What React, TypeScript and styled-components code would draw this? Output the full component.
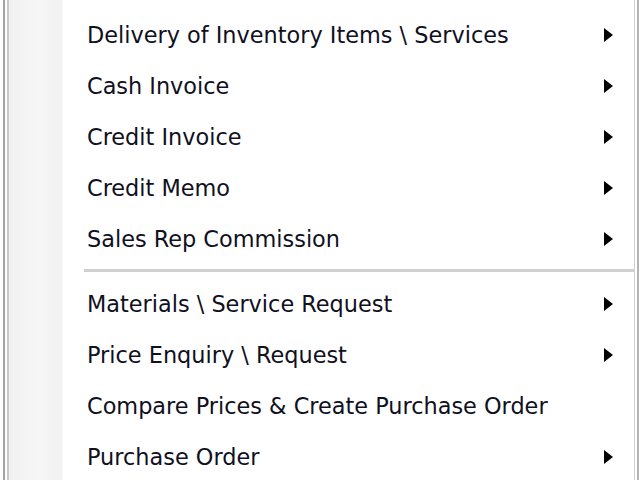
import React from 'react';
import styled, { createGlobalStyle } from 'styled-components';

type Item = { label: string; sub?: boolean };

const groups: Item[][] = [
  [
    { label: 'Delivery of Inventory Items \\ Services', sub: true },
    { label: 'Cash Invoice', sub: true },
    { label: 'Credit Invoice', sub: true },
    { label: 'Credit Memo', sub: true },
    { label: 'Sales Rep Commission', sub: true },
  ],
  [
    { label: 'Materials \\ Service Request', sub: true },
    { label: 'Price Enquiry \\ Request', sub: true },
    { label: 'Compare Prices & Create Purchase Order' },
    { label: 'Purchase Order', sub: true },
  ],
];

const App: React.FC = () => {
  return (
    <>
      <GlobalStyle />
      <Page>
        <Menu>
          <Gutter />
          <Items>
            {groups.map((group, gi) => (
              <React.Fragment key={gi}>
                {gi > 0 && <Separator />}
                {group.map((item) => (
                  <Row key={item.label}>
                    <Label>{item.label}</Label>
                    {item.sub && <Arrow />}
                  </Row>
                ))}
              </React.Fragment>
            ))}
          </Items>
        </Menu>
      </Page>
    </>
  );
};

export default App;

const GlobalStyle = createGlobalStyle`
  html, body {
    margin: 0;
    padding: 0;
    background: #ffffff;
  }
`;

const Page = styled.div`
  width: 640px;
  height: 480px;
  overflow: hidden;
  background: #ffffff;
  padding: 0 1px 0 3px;
  box-sizing: border-box;
  display: flex;
`;

// the menu frame: double grey line left and right
const Menu = styled.div`
  flex: 1;
  display: flex;
  border-left: 2px solid #a3a3a3;
  border-right: 2px solid #b4b4b4;
  box-shadow: inset 2px 0 0 #ffffff, inset 4px 0 0 #c9c9c9,
    inset -2px 0 0 #ffffff, inset -3px 0 0 #d2d2d2;
  background: #ffffff;
`;

// icon column on the left
const Gutter = styled.div`
  width: 53px;
  margin-left: 4px;
  background: linear-gradient(to right, #f1f1f1, #f6f6f6 60%, #f1f1f1);
  border-right: 1px solid #f7f7f7;
`;

const Items = styled.div`
  flex: 1;
  display: flex;
  flex-direction: column;
  padding-top: 9px;
  padding-left: 24px;
  padding-right: 3px;
`;

const Row = styled.div`
  height: 51px;
  flex-shrink: 0;
  display: flex;
  align-items: center;
  justify-content: space-between;
  padding-right: 21px;
`;

const Label = styled.span`
  font-family: 'DejaVu Sans', 'Liberation Sans', sans-serif;
  font-size: 22.4px;
  color: #10101e;
  white-space: nowrap;
`;

const Arrow = styled.span`
  width: 0;
  height: 0;
  border-top: 7px solid transparent;
  border-bottom: 7px solid transparent;
  border-left: 9px solid #000000;
`;

const Separator = styled.div`
  height: 3px;
  flex-shrink: 0;
  margin: 5px 0 5px -3px;
  background: #d0d0d0;
  border-bottom: 1px solid #ffffff;
`;
